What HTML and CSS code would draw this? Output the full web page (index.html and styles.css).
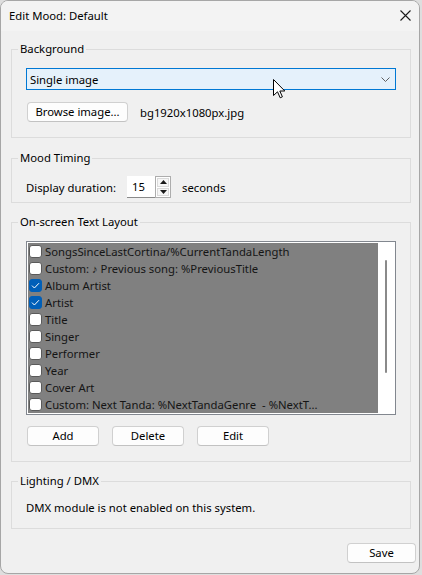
FILE: index.html
```html
<!DOCTYPE html>
<html lang="en">
  <head>
    <meta charset="UTF-8" />
    <meta name="viewport" content="width=device-width, initial-scale=1.0" />
    <title>Edit Mood: Default</title>
    <link rel="stylesheet" href="styles.css">
  </head>
  <body>
    <div class="window">
      <div class="titlebar">
        <span class="title">Edit Mood: Default</span>
        <svg class="close" width="11" height="11" viewBox="0 0 11 11">
          <path d="M0.5 0.5 L10.5 10.5 M10.5 0.5 L0.5 10.5" stroke="#1a1a1a" stroke-width="1.1" fill="none"/>
        </svg>
      </div>

      <div class="client">
        <fieldset class="group group-bg">
          <legend>Background</legend>
          <div class="combo">
            <span>Single image</span>
            <svg class="chevron" width="9" height="5" viewBox="0 0 9 5">
              <path d="M0.5 0.5 L4.5 4.5 L8.5 0.5" stroke="#606060" stroke-width="1" fill="none"/>
            </svg>
          </div>
          <div class="file-row">
            <button class="btn browse-button">Browse image...</button>
            <span class="file-name">bg1920x1080px.jpg</span>
          </div>
        </fieldset>

        <fieldset class="group group-timing">
          <legend>Mood Timing</legend>
          <div class="timing-row">
            <span class="timing-label">Display duration:</span>
            <div class="spinner">
              <span class="spinner-value">15</span>
              <div class="spinner-arrows">
                <span class="spin-btn">
                  <svg width="7" height="4" viewBox="0 0 7 4"><path d="M3.5 0 L7 4 L0 4 Z" fill="#1a1a1a"/></svg>
                </span>
                <span class="spin-btn">
                  <svg width="7" height="4" viewBox="0 0 7 4"><path d="M0 0 L7 0 L3.5 4 Z" fill="#1a1a1a"/></svg>
                </span>
              </div>
            </div>
            <span>seconds</span>
          </div>
        </fieldset>

        <fieldset class="group group-layout">
          <legend>On-screen Text Layout</legend>
          <div class="listbox">
            <ul class="items">
              <li class="item"><span class="check"></span>SongsSinceLastCortina/%CurrentTandaLength</li>
              <li class="item"><span class="check"></span>Custom: ♪ Previous song: %PreviousTitle</li>
              <li class="item"><span class="check checked"><svg width="9" height="7" viewBox="0 0 9 7"><path d="M1 3.6 L3.4 6 L8 1.2" stroke="#fff" stroke-width="1" fill="none"/></svg></span>Album Artist</li>
              <li class="item"><span class="check checked"><svg width="9" height="7" viewBox="0 0 9 7"><path d="M1 3.6 L3.4 6 L8 1.2" stroke="#fff" stroke-width="1" fill="none"/></svg></span>Artist</li>
              <li class="item"><span class="check"></span>Title</li>
              <li class="item"><span class="check"></span>Singer</li>
              <li class="item"><span class="check"></span>Performer</li>
              <li class="item"><span class="check"></span>Year</li>
              <li class="item"><span class="check"></span>Cover Art</li>
              <li class="item"><span class="check"></span>Custom: Next Tanda: %NextTandaGenre&nbsp; - %NextT...</li>
            </ul>
            <div class="scroll">
              <div class="thumb"></div>
            </div>
          </div>
          <div class="list-buttons">
            <button class="btn list-button">Add</button>
            <button class="btn list-button">Delete</button>
            <button class="btn list-button">Edit</button>
          </div>
        </fieldset>

        <fieldset class="group group-dmx">
          <legend>Lighting / DMX</legend>
          <p class="dmx-text">DMX module is not enabled on this system.</p>
        </fieldset>

        <div class="footer">
          <button class="btn save-button">Save</button>
        </div>
      </div>

      <svg class="cursor" width="13" height="20" viewBox="0 0 13 20">
        <path d="M0.5 0.5 L0.5 16.5 L4.5 12.8 L7.2 18.8 L9.4 17.8 L6.8 12 L11.8 12 Z" fill="#fff" stroke="#000" stroke-width="1" stroke-linejoin="round"/>
      </svg>
    </div>
  </body>
</html>
```

FILE: styles.css
```css
body{
  margin: 0;
  background-color: #dedede;
  font-family: "Noto Sans", Arial, sans-serif;
  font-size: 11.3px;
  color: #000;
}
.window{
  position: relative;
  width: 418px;
  height: 572px;
  border: 1px solid #a6a6a6;
  border-radius: 8px;
  background-color: #f0f0f0;
  overflow: hidden;
}
.titlebar{
  height: 30px;
  display: flex;
  align-items: center;
  justify-content: space-between;
  padding: 0 8px 0 8px;
  background-color: #f3f3f3;
}
.title{
  font-size: 11.3px;
  line-height: 16px;
}
.close{
  display: block;
  margin-top: -1px;
}
.client{
  padding: 0 3px 0 10px;
}
.group{
  margin: 0;
  width: 400px;
  box-sizing: border-box;
  border: 1px solid #dcdcdc;
  padding: 11px 14px 15px 14px;
  min-width: 0;
}
.group legend{
  padding: 0 2px;
  margin-left: -8px;
  line-height: 16px;
}
.group-bg{
  margin-top: 10px;
}
.group-timing{
  margin-top: 12px;
  padding-top: 10px;
  padding-bottom: 4px;
}
.group-layout{
  margin-top: 11px;
  padding-bottom: 15px;
}
.group-dmx{
  margin-top: 11px;
  padding-bottom: 12px;
}
.combo{
  height: 22px;
  box-sizing: border-box;
  border: 1px solid #0078d4;
  background-color: #e5f1fb;
  display: flex;
  align-items: center;
  justify-content: space-between;
  padding: 0 5px 0 3px;
}
.chevron{
  display: block;
}
.file-row{
  display: flex;
  align-items: center;
  margin-top: 12px;
  gap: 12px;
}
.btn{
  font-family: "Noto Sans", Arial, sans-serif;
  font-size: 11.3px;
  color: #000;
  background-color: #fdfdfd;
  border: 1px solid #d0d0d0;
  border-bottom-color: #c2c2c2;
  border-radius: 4px;
  height: 20px;
  padding: 0;
  line-height: 16px;
  box-sizing: border-box;
}
.browse-button{
  width: 101px;
  margin-left: 1px;
}
.timing-row{
  display: flex;
  align-items: center;
}
.timing-label{
  width: 101px;
}
.spinner{
  display: flex;
  height: 22px;
  margin-right: 11px;
}
.spinner-value{
  width: 28px;
  background-color: #fff;
  border-bottom: 1px solid #8a8a8a;
  box-sizing: border-box;
  padding-left: 5px;
  line-height: 21px;
}
.spinner-arrows{
  width: 16px;
  display: flex;
  flex-direction: column;
  border: 1px solid #adadad;
  box-sizing: border-box;
  background-color: #fff;
  padding: 1px;
  gap: 1px;
}
.spin-btn{
  flex: 1;
  display: flex;
  align-items: center;
  justify-content: center;
  background-color: #f6f6f6;
  border: 1px solid #dadada;
}
.spin-btn svg{
  display: block;
}
.listbox{
  display: flex;
  height: 174px;
  box-sizing: border-box;
  border: 1px solid #82878f;
  background-color: #fff;
  padding: 1px 0 1px 1px;
}
.items{
  list-style: none;
  margin: 0;
  padding: 0;
  width: 350px;
  background-color: #808080;
}
.item{
  height: 17px;
  display: flex;
  align-items: center;
  padding-left: 1px;
  color: #151515;
  white-space: nowrap;
  overflow: hidden;
}
.check{
  width: 13px;
  height: 13px;
  box-sizing: border-box;
  border: 1px solid #5a5a5a;
  border-radius: 3px;
  background-color: #fff;
  margin-right: 3px;
  flex-shrink: 0;
  display: flex;
  align-items: center;
  justify-content: center;
}
.check.checked{
  background-color: #005fb8;
  border-color: #005fb8;
}
.check svg{
  display: block;
}
.scroll{
  flex: 1;
  padding: 17px 0 0 7px;
}
.thumb{
  width: 2px;
  height: 113px;
  background-color: #8a8a8a;
  border-radius: 1px;
}
.list-buttons{
  display: flex;
  gap: 13px;
  margin-top: 11px;
  padding-left: 1px;
}
.list-button{
  width: 72px;
}
.dmx-text{
  margin: 0;
  line-height: 16px;
}
.footer{
  display: flex;
  justify-content: flex-end;
  margin-top: 14px;
}
.save-button{
  width: 69px;
}
.cursor{
  position: absolute;
  left: 272px;
  top: 78px;
}
```
